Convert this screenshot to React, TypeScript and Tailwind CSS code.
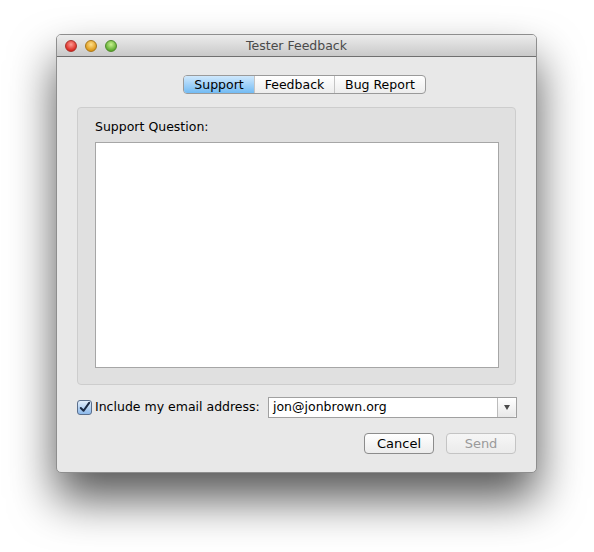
import { useState } from "react";

const font = { fontFamily: '"DejaVu Sans", "Liberation Sans", sans-serif' };

function TrafficLight({ from, to, edge }: { from: string; to: string; edge: string }) {
  return (
    <span
      className="block size-[12px] rounded-full border"
      style={{ background: `radial-gradient(circle at 50% 35%, ${from}, ${to} 75%)`, borderColor: edge }}
    />
  );
}

export default function App() {
  const [tab, setTab] = useState("Support");
  const [includeEmail, setIncludeEmail] = useState(true);
  const tabs = ["Support", "Feedback", "Bug Report"];

  return (
    <div className="h-[552px] w-[594px] bg-white pl-[56px] pt-[34px]" style={font}>
      <div className="flex h-[439px] w-[481px] flex-col overflow-hidden rounded-[5px] border border-[#8e8e8e] bg-[#e8e8e8] shadow-[0_26px_46px_rgba(0,0,0,0.66)]">
        <div className="relative flex h-[22px] shrink-0 items-center justify-center border-b border-[#6f6f6f] bg-gradient-to-b from-[#ececec] to-[#c9c9c9] pt-[2px]">
          <div className="absolute left-[8px] top-[5px] flex gap-[8px]">
            <TrafficLight from="#ff9a93" to="#d8241c" edge="#a8322b" />
            <TrafficLight from="#ffe08a" to="#dc9615" edge="#a8781c" />
            <TrafficLight from="#c8f28f" to="#5aa82c" edge="#4f8a2b" />
          </div>
          <span className="text-[12.5px] text-[#4a4a4a]">Tester Feedback</span>
        </div>

        <div className="flex flex-1 flex-col px-[20px] pt-[18px] text-[12.5px]">
          <div className="flex pl-[106px]">
            <div className="flex h-[19px] overflow-hidden rounded-[4px] border border-[#9a9a9a] bg-gradient-to-b from-white to-[#ededed] text-black">
              {tabs.map((t, i) => (
                <button
                  key={t}
                  type="button"
                  onClick={() => setTab(t)}
                  className={`flex items-center justify-center pt-[1px] leading-none ${
                    i === 0 ? "w-[70px]" : i === 1 ? "w-[80px]" : "w-[91px]"
                  } ${i > 0 ? "border-l border-[#c4c4c4]" : ""} ${
                    tab === t ? "bg-gradient-to-b from-[#cfe8fc] to-[#72bbf3] text-black" : ""
                  }`}
                >
                  {t}
                </button>
              ))}
            </div>
          </div>

          <div className="mt-[13px] flex h-[278px] flex-col rounded-[4px] border border-[#cdcdcd] bg-[#e0e0e0] px-[17px] pt-[11px]">
            <div className="leading-[16px] text-black">{tab} Question:</div>
            <textarea className="mt-[7px] h-[226px] w-[404px] resize-none border border-[#a6a6a6] bg-white outline-none" />
          </div>

          <div className="mt-[12px] flex items-center">
            <label className="flex items-center whitespace-nowrap text-black">
              <input
                type="checkbox"
                checked={includeEmail}
                onChange={(e) => setIncludeEmail(e.target.checked)}
                className="sr-only"
              />
              <span className="mr-[3px] flex size-[15px] items-center justify-center rounded-[3px] border border-[#5b6f8c] bg-gradient-to-b from-[#e2eefb] to-[#8db9ea]">
                {includeEmail ? (
                  <svg viewBox="0 0 14 14" className="size-[13px]">
                    <path d="M3 7.5 L6 10.5 L12 2" fill="none" stroke="#1b2a44" strokeWidth="2.2" strokeLinecap="round" strokeLinejoin="round" />
                  </svg>
                ) : null}
              </span>
              Include my email address:
            </label>
            <div className="-mr-[1px] ml-auto flex h-[21px] w-[249px] border border-[#a0a0a0] bg-white">
              <div className="flex flex-1 items-center pl-[4px] text-black">jon@jonbrown.org</div>
              <div className="flex w-[19px] items-center justify-center rounded-r-[3px] border-l border-[#bcbcbc] bg-gradient-to-b from-white to-[#e8e8e8]">
                <span className="h-0 w-0 border-x-[3.5px] border-t-[5px] border-x-transparent border-t-[#4a4a4a]" />
              </div>
            </div>
          </div>

          <div className="mt-[15px] flex justify-end gap-[12px]">
            <button
              type="button"
              className="h-[21px] w-[70px] rounded-[4px] border border-[#8c8c8c] bg-gradient-to-b from-white to-[#ececec] text-[13px] leading-none text-black"
            >
              Cancel
            </button>
            <button
              type="button"
              className="h-[21px] w-[70px] rounded-[4px] border border-[#c4c4c4] bg-gradient-to-b from-[#f6f6f6] to-[#ebebeb] text-[13px] leading-none text-[#9a9a9a]"
            >
              Send
            </button>
          </div>
        </div>
      </div>
    </div>
  );
}
